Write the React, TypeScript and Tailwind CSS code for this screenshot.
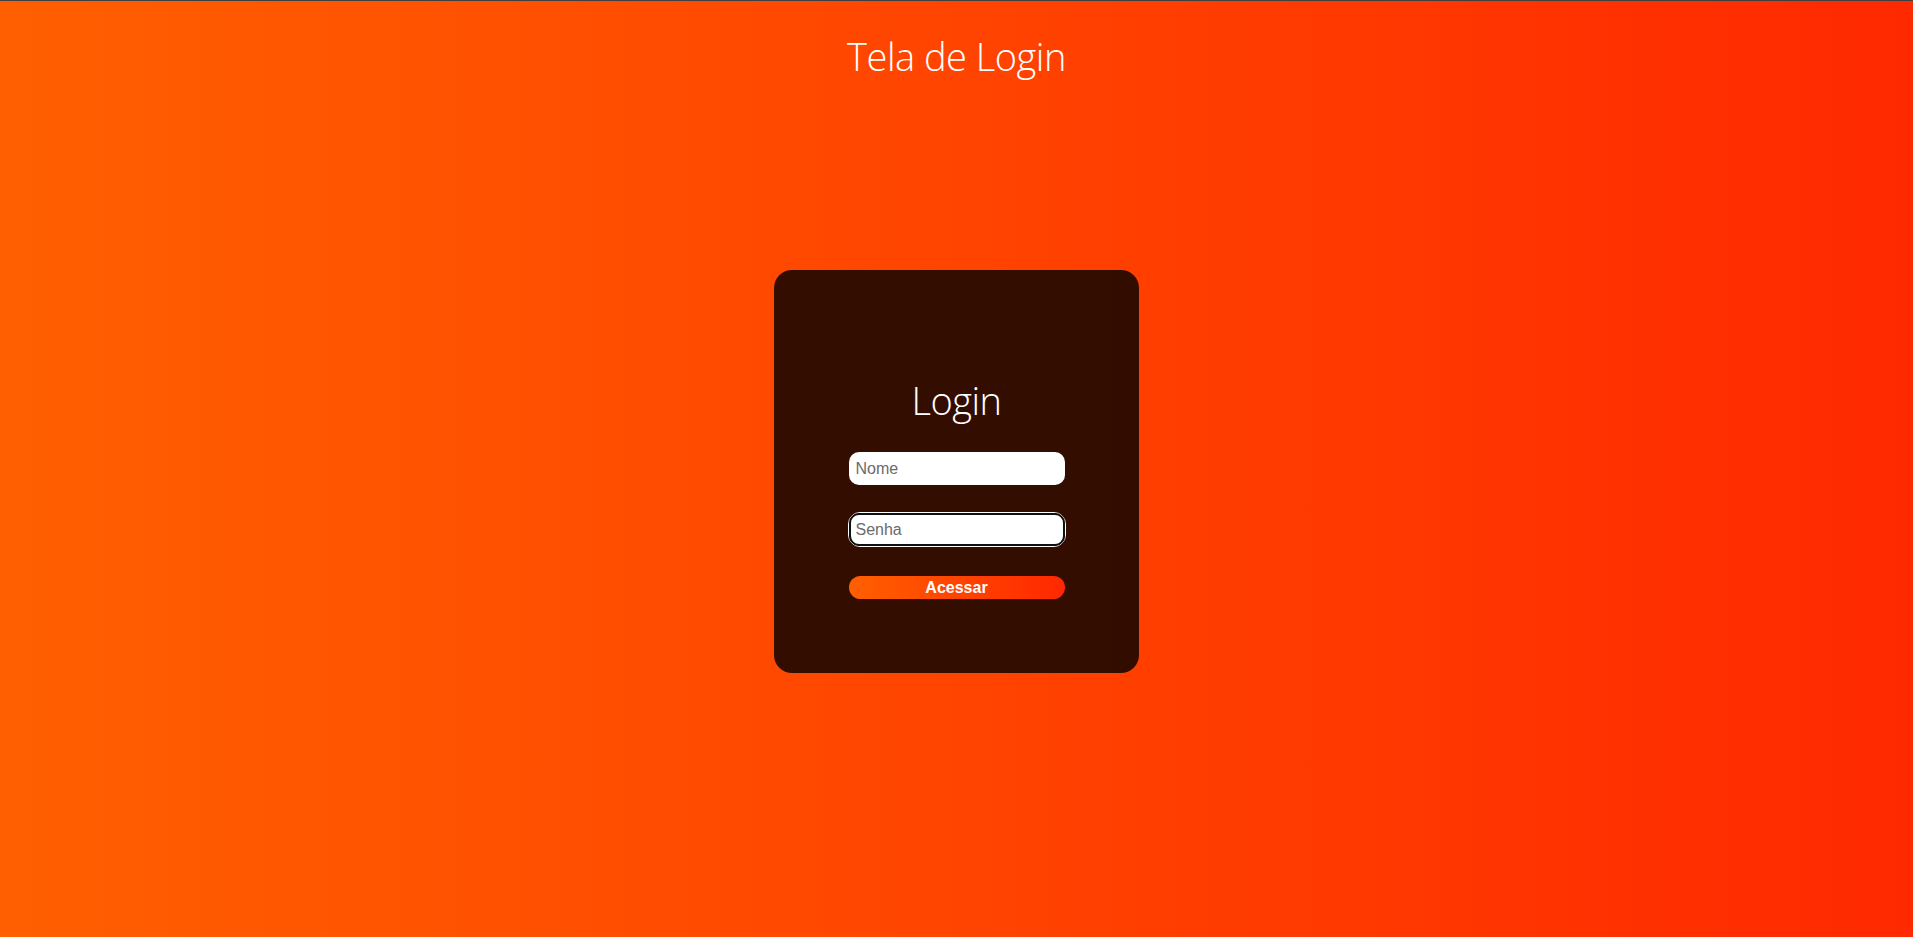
export default function App() {
  return (
    <div className="min-h-[937px] w-full border-t border-[#404040] bg-[linear-gradient(to_right,#ff5f00,#ff2900)] [font-family:'Liberation_Sans',Arial,sans-serif]">
      <h1 className="pt-[31px] text-center text-[38px] font-light leading-[48px] tracking-[-0.5px] text-white [font-family:'Open_Sans',sans-serif]">
        Tela de Login
      </h1>
      <div className="mx-auto mt-[190px] flex h-[403px] w-[365px] flex-col items-center rounded-[18px] bg-black/80 pt-[106px]">
        <h2 className="text-[38px] font-light leading-[48px] tracking-[-0.5px] text-white [font-family:'Open_Sans',sans-serif]">
          Login
        </h2>
        <input
          type="text"
          placeholder="Nome"
          className="mt-[28px] h-[33px] w-[216px] rounded-[10px] bg-white px-[7px] text-[16px] text-black outline-none placeholder:text-[#6b6b6b]"
        />
        <div className="mt-[27px] rounded-[12px] border border-white p-0">
          <input
            type="password"
            placeholder="Senha"
            className="block h-[33px] w-[216px] rounded-[10px] border-2 border-[#101010] bg-white px-[5px] text-[16px] text-black outline-none placeholder:text-[#6b6b6b]"
          />
        </div>
        <button className="mt-[29px] h-[23px] w-[216px] rounded-full bg-[linear-gradient(to_right,#ff6000,#ff2800)] text-[16px] font-bold leading-[23px] text-white">
          Acessar
        </button>
      </div>
    </div>
  );
}
